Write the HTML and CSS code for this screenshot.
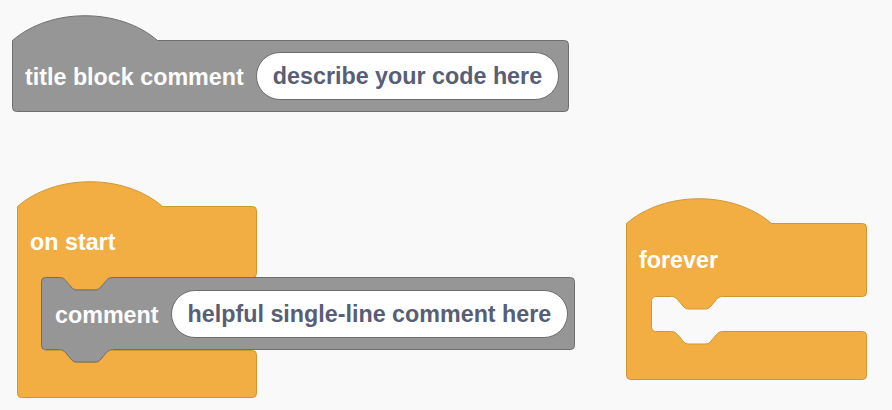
FILE: index.html
```html
<!DOCTYPE html>
<html lang="en">
<head>
<meta charset="utf-8">
<title>Blocks</title>
<link rel="stylesheet" href="styles.css">
</head>
<body>
<div class="canvas">

  <div class="block title-block">
    <svg class="shape" width="558" height="98" viewBox="0 0 558 98">
      <path class="gray" d="M0.5,25.5 c38,-33 107,-33 145,0 H552.5 a4,4 0 0 1 4,4 V92.5 a4,4 0 0 1 -4,4 H4.5 a4,4 0 0 1 -4,-4 Z"/>
    </svg>
    <div class="hat-space"></div>
    <div class="row row-72">
      <span class="label">title block comment</span>
      <span class="pill">describe your code here</span>
    </div>
  </div>

  <div class="block start-block">
    <svg class="shape" width="241" height="219" viewBox="0 0 241 219">
      <path class="orange" d="M0.5,26.5 c38,-33 107,-33 145,0 H235.5 a4,4 0 0 1 4,4 V93.5 a4,4 0 0 1 -4,4 H94.5 c-3,0 -4.5,1.5 -6,3 l-5,6 c-1.5,2 -3,3 -6,3 h-17 c-3,0 -4.5,-1 -6,-3 l-5,-6 c-1.5,-1.5 -3,-3 -6,-3 H28.5 a4,4 0 0 0 -4,4 V166.5 a4,4 0 0 0 4,4 H43.5 c3,0 4.5,1.5 6,3 l5,6 c1.5,2 3,3 6,3 h17 c3,0 4.5,-1 6,-3 l5,-6 c1.5,-1.5 3,-3 6,-3 H235.5 a4,4 0 0 1 4,4 V213.5 a4,4 0 0 1 -4,4 H4.5 a4,4 0 0 1 -4,-4 Z"/>
    </svg>
    <div class="hat-space hat-26"></div>
    <div class="row row-71">
      <span class="label">on start</span>
    </div>
    <div class="statements">
      <div class="block comment-block">
        <svg class="shape" width="535" height="87" viewBox="0 0 535 87">
          <path class="gray" d="M0.5,4.5 a4,4 0 0 1 4,-4 H18.5 c3,0 4.5,1.5 6,3 l5.5,6.5 c1.5,2 3,3 6,3 h18 c3,0 4.5,-1 6,-3 l5.5,-6.5 c1.5,-1.5 3,-3 6,-3 H529.5 a4,4 0 0 1 4,4 V68.5 a4,4 0 0 1 -4,4 H71.5 c-3,0 -4.5,1.5 -6,3 l-5.5,6.5 c-1.5,2 -3,3 -6,3 h-18 c-3,0 -4.5,-1 -6,-3 l-5.5,-6.5 c-1.5,-1.5 -3,-3 -6,-3 H4.5 a4,4 0 0 1 -4,-4 Z"/>
        </svg>
        <div class="row row-73 row-comment">
          <span class="label">comment</span>
          <span class="pill">helpful single-line comment here</span>
        </div>
      </div>
    </div>
    <div class="arm-space"></div>
  </div>

  <div class="block forever-block">
    <svg class="shape" width="242" height="183" viewBox="0 0 242 183">
      <path class="orange" d="M0.5,25.5 c38,-33 107,-33 145,0 H236.5 a4,4 0 0 1 4,4 V94.5 a4,4 0 0 1 -4,4 H96.5 c-3,0 -4.5,1.5 -6,3 l-5.5,6.5 c-1.5,2 -3,3 -6,3 h-16 c-3,0 -4.5,-1 -6,-3 l-5.5,-6.5 c-1.5,-1.5 -3,-3 -6,-3 H29.5 a4,4 0 0 0 -4,4 V129.5 a4,4 0 0 0 4,4 H45.5 c3,0 4.5,1.5 6,3 l5.5,6.5 c1.5,2 3,3 6,3 h16 c3,0 4.5,-1 6,-3 l5.5,-6.5 c1.5,-1.5 3,-3 6,-3 H236.5 a4,4 0 0 1 4,4 V177.5 a4,4 0 0 1 -4,4 H4.5 a4,4 0 0 1 -4,-4 Z"/>
    </svg>
    <div class="hat-space"></div>
    <div class="row row-73">
      <span class="label">forever</span>
    </div>
  </div>

</div>
</body>
</html>
```

FILE: styles.css
```css
html, body {
  margin: 0;
  padding: 0;
  background: #f9f9f9;
}

.canvas {
  position: relative;
  width: 892px;
  height: 410px;
  overflow: hidden;
  font-family: "Liberation Sans", Arial, Helvetica, sans-serif;
  font-weight: bold;
  font-size: 23.3px;
}

.block {
  position: relative;
  display: flex;
  flex-direction: column;
}

.canvas > .block {
  position: absolute;
}

.title-block { left: 12px; top: 15px; width: 557px; }
.start-block { left: 17px; top: 180px; width: 240px; }
.forever-block { left: 626px; top: 198px; width: 241px; }

.shape {
  position: absolute;
  left: 0;
  top: 0;
  overflow: visible;
}

.gray {
  fill: #969696;
  stroke: #6e6e6e;
  stroke-width: 1;
}

.orange {
  fill: #f2ae42;
  stroke: #cf9733;
  stroke-width: 1;
}

.hat-space { height: 25px; }
.hat-space.hat-26 { height: 26px; }

.row {
  position: relative;
  display: flex;
  align-items: center;
  gap: 12px;
  padding-left: 13px;
  white-space: nowrap;
}

.row-72 { height: 72px; }
.row-71 { height: 71px; }
.row-73 { height: 73px; }
.row-comment { padding-left: 14px; padding-top: 1px; box-sizing: border-box; }

.label {
  color: #ffffff;
  line-height: 1;
  padding-top: 3px;
}

.pill {
  display: flex;
  align-items: center;
  height: 46px;
  padding: 2px 16px 0;
  box-sizing: content-box;
  background: #ffffff;
  border: 1px solid #6e6e6e;
  border-radius: 24px;
  color: #575e75;
  line-height: 1;
}

.pill { height: 44px; }

.statements {
  margin-left: 24px;
  display: flex;
  flex-direction: column;
}

.comment-block {
  width: 534px;
}

.arm-space { height: 48px; }
```
